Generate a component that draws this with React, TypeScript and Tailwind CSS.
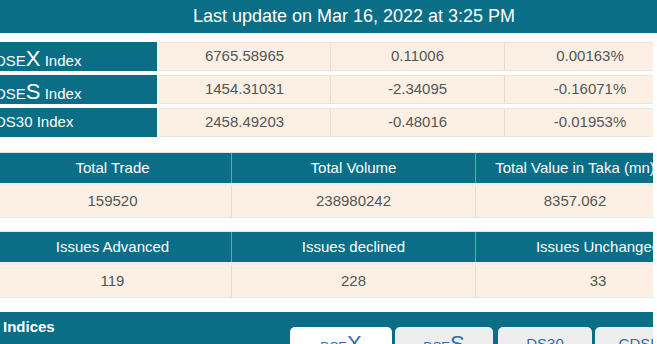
const indexRows = [
  { pre: "DSE", big: "X", values: ["6765.58965", "0.11006", "0.00163%"] },
  { pre: "DSE", big: "S", values: ["1454.31031", "-2.34095", "-0.16071%"] },
  { pre: "DS30", big: "", values: ["2458.49203", "-0.48016", "-0.01953%"] },
];

const App = () => {
  return (
    <div className="w-[657px] h-[344px] overflow-hidden bg-white font-['Liberation_Sans',Arial,sans-serif]">
      {/* top bar */}
      <div className="h-[33px] bg-[#0b6e87] text-white text-[18px] flex items-center justify-center pl-[51px]">
        Last update on Mar 16, 2022 at 3:25 PM
      </div>

      <div className="w-[653px] overflow-hidden">
        <div className="-ml-[6px] w-[740px]">
          {/* index table */}
          <div className="mt-[9px] flex flex-col gap-[4px]">
            {indexRows.map((row, i) => (
              <div key={i} className="flex h-[29px]">
                <div
                  className={
                    row.big
                      ? "w-[163px] bg-[#0b6e87] text-white text-[15px] flex items-end pb-[1px] pl-[1px] leading-none"
                      : "w-[163px] bg-[#0b6e87] text-white text-[15px] flex items-center pl-[1px]"
                  }
                >
                  <span>
                    {row.pre}
                    {row.big && <span className="text-[22px] leading-none">{row.big}</span>} Index
                  </span>
                </div>
                <div className="ml-[2px] flex bg-[#fcf0e4] text-[#555] text-[15px] border-y border-[#efe4d8]">
                  <div className="w-[172px] flex items-center justify-center border-r border-[#e8dccf]">{row.values[0]}</div>
                  <div className="w-[174px] flex items-center justify-center border-r border-[#e8dccf]">{row.values[1]}</div>
                  <div className="w-[170px] flex items-center justify-center">{row.values[2]}</div>
                </div>
              </div>
            ))}
          </div>

          {/* trade summary */}
          <div className="mt-[15px] border-y border-[#e2e6e0]">
            <div className="flex h-[33px] bg-[#0b6e87] text-white text-[15px] border-b-[3px] border-[#f1eee8]">
              <div className="w-[238px] flex items-center justify-center border-r border-[#6aa2b1]">Total Trade</div>
              <div className="w-[244px] flex items-center justify-center border-r border-[#6aa2b1]">Total Volume</div>
              <div className="w-[198px] flex items-center justify-center whitespace-nowrap">Total Value in Taka (mn)</div>
            </div>
            <div className="flex h-[31px] bg-[#fcf0e4] text-[#555] text-[15px]">
              <div className="w-[238px] flex items-center justify-center border-r border-[#e8dccf]">159520</div>
              <div className="w-[244px] flex items-center justify-center border-r border-[#e8dccf]">238980242</div>
              <div className="w-[198px] flex items-center justify-center">8357.062</div>
            </div>
          </div>

          {/* issues */}
          <div className="mt-[13px] border-y border-[#e2e6e0]">
            <div className="flex h-[33px] bg-[#0b6e87] text-white text-[15px] border-b-[3px] border-[#f1eee8]">
              <div className="w-[238px] flex items-center justify-center border-r border-[#6aa2b1]">Issues Advanced</div>
              <div className="w-[244px] flex items-center justify-center border-r border-[#6aa2b1]">Issues declined</div>
              <div className="w-[244px] flex items-center justify-center whitespace-nowrap">Issues Unchanged</div>
            </div>
            <div className="flex h-[32px] bg-[#fcf0e4] text-[#555] text-[15px]">
              <div className="w-[238px] flex items-center justify-center border-r border-[#e8dccf]">119</div>
              <div className="w-[244px] flex items-center justify-center border-r border-[#e8dccf]">228</div>
              <div className="w-[244px] flex items-center justify-center">33</div>
            </div>
          </div>

          {/* indices bar with tabs */}
          <div className="mt-[14px] flex h-[40px] bg-[#0b6e87]">
            <div className="w-[296px] pl-[9px] pt-[4px] text-[15px] font-bold text-white">Indices</div>
            <div className="mt-[15px] flex items-start text-[#2f6fb0] text-[15px]">
              <div className="w-[102px] h-[30px] bg-white rounded-t-[5px] flex items-start justify-center pt-[6px]">
                <span>
                  <span className="text-[13px]">DSE</span>
                  <span className="text-[22px] leading-none">X</span>
                </span>
              </div>
              <div className="ml-[3px] w-[98px] h-[30px] bg-[#eeeeee] rounded-t-[5px] flex items-start justify-center pt-[6px]">
                <span>
                  <span className="text-[13px]">DSE</span>
                  <span className="text-[22px] leading-none">S</span>
                </span>
              </div>
              <div className="ml-[5px] w-[94px] h-[30px] bg-[#eeeeee] rounded-t-[5px] flex items-start justify-center pt-[6px]">
                DS30
              </div>
              <div className="ml-[3px] w-[98px] h-[30px] bg-[#eeeeee] rounded-t-[5px] flex items-start justify-center pt-[6px]">
                CDSET
              </div>
            </div>
          </div>
        </div>
      </div>
    </div>
  );
};

export default App;
